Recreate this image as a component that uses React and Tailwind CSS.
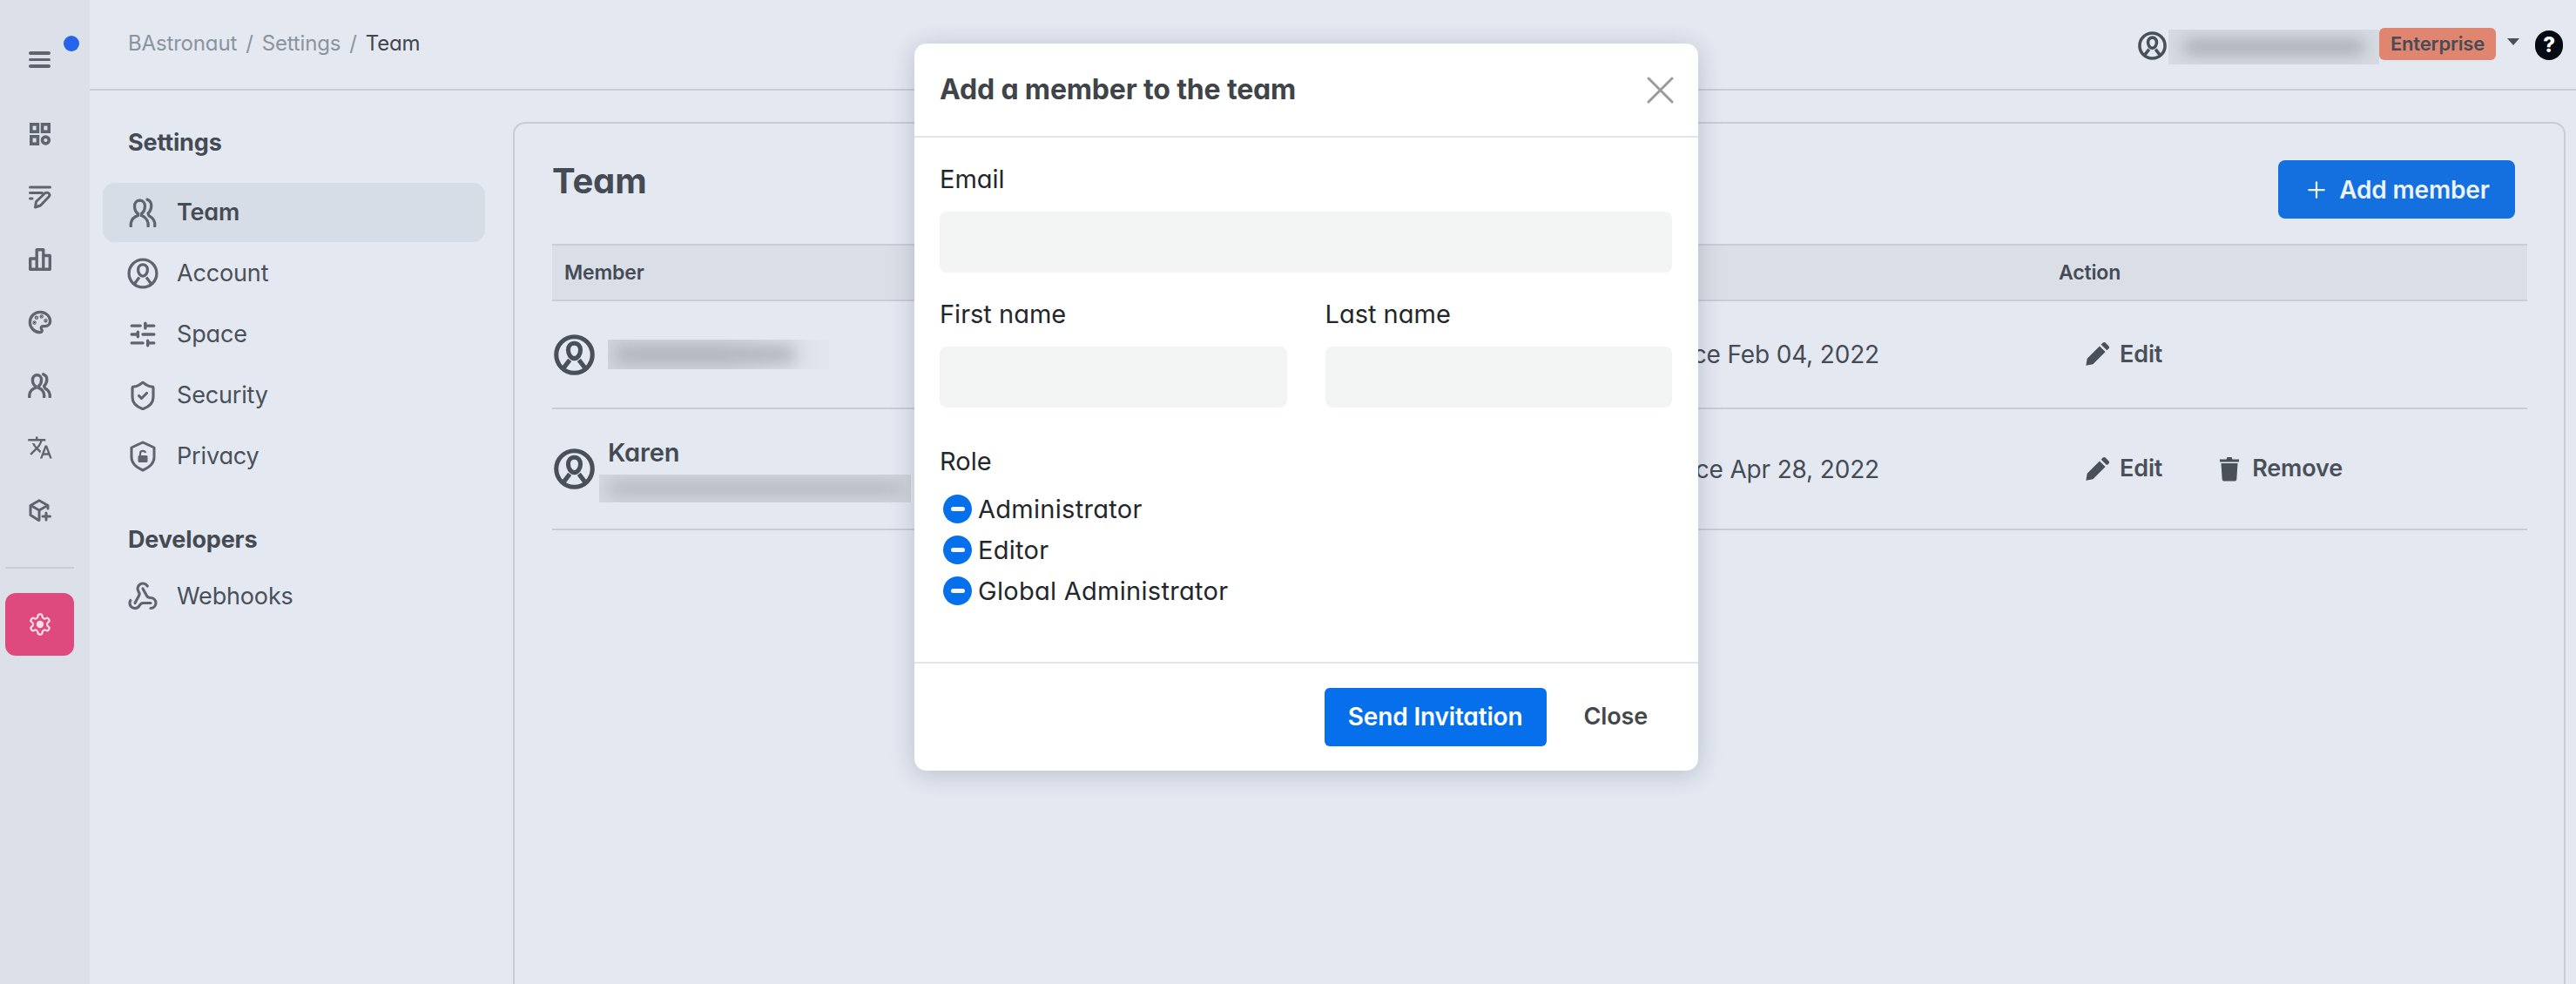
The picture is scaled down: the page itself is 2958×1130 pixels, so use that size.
import { Palette, Plus, ShieldCheck, SlidersHorizontal, Webhook } from 'lucide-react';
import { MdTranslate } from 'react-icons/md';

const UserRing = ({ size = 33, stroke = 2.6, className = 'text-[#4a5059]' }) => (
  <svg width={size} height={size} viewBox="0 0 24 24" fill="none" stroke="currentColor" strokeWidth={stroke} className={className}>
    <circle cx="12" cy="12" r="10.6" />
    <path d="M12 5.2c-2.2 0-3.6 1.7-3.6 3.9 0 2.4 1.5 5 3.6 5s3.6-2.6 3.6-5c0-2.2-1.4-3.9-3.6-3.9z" />
    <path d="M5.8 19.6l3.5-4.6M18.2 19.6l-3.5-4.6" />
  </svg>
);

const TeamIcon = ({ size = 32, stroke = 2.1 }) => (
  <svg width={size} height={size} viewBox="0 0 24 24" fill="none" stroke="#5f656e" strokeWidth={stroke} strokeLinecap="round">
    <path d="M9.500 2.200c-2.600 0-4.200 2-4.200 4.600 0 2.600 1.200 5 2.800 6.200v1.400c-2.900 1-5.400 3-5.800 6.800v2" />
    <path d="M9.500 2.200c2.600 0 4.200 2 4.200 4.600 0 2.600-1.200 5-2.800 6.200v1.400c2 .7 5 3 5.400 6.800v2" />
    <path d="M15.500 1.500c2.400.8 3.400 2.600 3.400 5 0 2.800-1.200 4.800-2.600 6.200 0 1 .4 1.600 1 2.200 1.800 1 4 3 4.400 6v2.200" />
  </svg>
);

const DashIcon = () => (
  <svg width="24" height="26" viewBox="0 0 24 26" fill="none" stroke="#5f656e" strokeWidth="3.600">
    <rect x="1.800" y="1.800" width="7.600" height="8.400" />
    <rect x="14.600" y="1.800" width="7.600" height="8.400" />
    <rect x="1.800" y="15.800" width="7.600" height="8.400" />
    <circle cx="18.400" cy="20" r="3.900" />
  </svg>
);

const NotesIcon = () => (
  <svg width="26" height="27" viewBox="0 0 26 27" fill="none" stroke="#5f656e" strokeWidth="3" strokeLinecap="round">
    <path d="M1.500 2h23M1.500 8.500h14M1.500 15h2.500" />
    <path d="M7.500 25l1-6.500L18.500 9c1.200-1.100 3.400-1.100 4.500 0s1 2.800 0 3.900L13.500 23z" strokeLinejoin="round" />
  </svg>
);

const ChartIcon = () => (
  <svg width="26" height="26" viewBox="0 0 26 26" fill="none" stroke="#5f656e" strokeWidth="3.400" strokeLinejoin="round">
    <path d="M1.700 24.300V12h7.500v12.300zM9.200 24.300V1.700h7.600v22.600zM16.800 24.300V8.500h7.500v15.800z" />
  </svg>
);

const CubeIcon = () => (
  <svg width="26" height="27" viewBox="0 0 26 27" fill="none" stroke="#5f656e" strokeWidth="3" strokeLinecap="round" strokeLinejoin="round">
    <path d="M22 11V7.500L12 1.700 2 7.500v11l9.500 6" />
    <path d="M2.500 7.500l9.500 5.500 9.500-5.500M12 13v11" />
    <path d="M20 16v8M16 20h8.500" />
  </svg>
);

const GearIcon = () => (
  <svg width="28" height="28" viewBox="0 0 24 24" fill="none" stroke="#fbdce8" strokeWidth="1.900" strokeLinejoin="round">
    <path d="M12.220 2h-.44a2 2 0 0 0-2 2v.18a2 2 0 0 1-1 1.730l-.43.250a2 2 0 0 1-2 0l-.15-.08a2 2 0 0 0-2.730.730l-.22.380a2 2 0 0 0 .730 2.730l.15.100a2 2 0 0 1 1 1.720v.510a2 2 0 0 1-1 1.740l-.15.090a2 2 0 0 0-.730 2.730l.22.380a2 2 0 0 0 2.730.730l.15-.08a2 2 0 0 1 2 0l.43.250a2 2 0 0 1 1 1.730V20a2 2 0 0 0 2 2h.44a2 2 0 0 0 2-2v-.18a2 2 0 0 1 1-1.730l.43-.25a2 2 0 0 1 2 0l.15.08a2 2 0 0 0 2.730-.73l.22-.39a2 2 0 0 0-.73-2.730l-.15-.08a2 2 0 0 1-1-1.740v-.5a2 2 0 0 1 1-1.740l.15-.09a2 2 0 0 0 .73-2.730l-.22-.38a2 2 0 0 0-2.730-.73l-.15.08a2 2 0 0 1-2 0l-.43-.25a2 2 0 0 1-1-1.730V4a2 2 0 0 0-2-2z" />
    <circle cx="12" cy="12" r="3.600" fill="#fbdce8" stroke="none" />
  </svg>
);

const LockShield = () => (
  <svg width="32" height="36" viewBox="0 0 32 36" fill="none" stroke="#5f656e" strokeWidth="3" strokeLinejoin="round">
    <path d="M16 2l13 6v11c0 7-6 12-13 15C9 31 3 26 3 19V8z" />
    <rect x="10.500" y="17" width="11" height="8" rx="1.500" fill="#5f656e" stroke="none" />
    <path d="M13 17v-2.500c0-3.500 5.500-3.500 6-.5" strokeWidth="2.200" />
  </svg>
);

const PenIcon = () => (
  <svg width="32" height="32" viewBox="0 0 24 24" fill="#4a5059">
    <path d="M2.500 21.500l1-6L14.200 4.800l5 5L8.500 20.500zM20.500 8.500l-5-5 1.600-1.600c.6-.6 1.500-.6 2.100 0l2.900 2.900c.6.600.6 1.500 0 2.100z" />
  </svg>
);

const TrashIcon = () => (
  <svg width="24" height="29" viewBox="0 0 24 29" fill="#4a5059">
    <path d="M1 3.500h7.500L9.500 1h5l1 2.500H23v3H1zM2.500 8h19l-1.200 18.500c-.1 1.200-.9 2-2.100 2H5.800c-1.200 0-2-.8-2.100-2z" />
  </svg>
);

const Blurred = ({ className, bar }) => (
  <div className={`overflow-hidden ${className}`}>
    <div className={`blur-[9px] ${bar}`} />
  </div>
);

const railIcons = [
  { key: 'dash', icon: <DashIcon /> },
  { key: 'notes', icon: <NotesIcon /> },
  { key: 'chart', icon: <ChartIcon /> },
  { key: 'palette', icon: <Palette size={28} color="#5f656e" strokeWidth={2.8} /> },
  { key: 'team', icon: <TeamIcon size={29} stroke={2.8} /> },
  { key: 'lang', icon: <MdTranslate size={30} color="#5f656e" /> },
  { key: 'cube', icon: <CubeIcon /> },
];

const navItems = [
  { label: 'Team', icon: <TeamIcon size={34} stroke={2.3} />, active: true },
  { label: 'Account', icon: <UserRing size={36} stroke={2.2} className="text-[#5f656e]" /> },
  { label: 'Space', icon: <SlidersHorizontal size={34} color="#5f656e" strokeWidth={2.4} /> },
  { label: 'Security', icon: <ShieldCheck size={37} color="#5f656e" strokeWidth={2.1} /> },
  { label: 'Privacy', icon: <LockShield /> },
];

const NavRow = ({ label, icon, active }) => (
  <div className={`h-[68px] mb-[2px] rounded-[14px] flex items-center ${active ? 'bg-[#d6dde7]' : ''}`}>
    <div className="w-[36px] ml-[28px] flex justify-center">{icon}</div>
    <span className={`ml-[21px] text-[27px] ${active ? 'font-semibold text-[#454b54]' : 'text-[#4a5059]'}`}>{label}</span>
  </div>
);

const MemberRow = ({ height, name, blur, since, canRemove }) => (
  <div className={`flex items-center border-b-2 border-[#c8ccd6] ${height}`}>
    <div className="w-[1096px] flex items-center">
      <div className="w-[48px] ml-[1px] flex justify-center"><UserRing size={47} stroke={2.6} /></div>
      {blur}
      {name}
    </div>
    <div className="w-[620px] text-right pr-[192px] text-[28px] text-[#454b54] whitespace-nowrap">{since}</div>
    <div className="flex items-center pl-[42px]">
      <PenIcon />
      <span className="ml-[10px] text-[27px] font-semibold text-[#4a5059]">Edit</span>
      {canRemove && (
        <div className="flex items-center ml-[65px]">
          <TrashIcon />
          <span className="ml-[14px] text-[27px] font-semibold text-[#4a5059]">Remove</span>
        </div>
      )}
    </div>
  </div>
);

const Role = ({ label }) => (
  <div className="h-[47px] flex items-center pl-[4px]">
    <div className="w-[33px] h-[33px] rounded-full bg-[#0670ec] flex items-center justify-center">
      <div className="w-[16px] h-[5px] rounded-full bg-[#f2f5fa]" />
    </div>
    <span className="ml-[7px] text-[29px] tracking-[0.01em] text-[#23272b]">{label}</span>
  </div>
);

const Field = ({ label, className = '' }) => (
  <div className={className}>
    <div className="h-[40px] flex items-center text-[29px] tracking-normal text-[#23272b]">{label}</div>
    <div className="mt-[17px] h-[70px] rounded-[8px] bg-[#f3f5f5]" />
  </div>
);

const App = () => {
  return (
    <div className="relative w-[2958px] h-[1130px] overflow-hidden flex bg-[#e3e8f1] font-['Inter','Liberation_Sans',sans-serif] [font-feature-settings:'cv11'] tracking-[-0.01em]">
      {/* icon rail */}
      <div className="w-[103px] bg-[#dce0e9] flex flex-col items-center shrink-0">
        <div className="relative h-[118px] w-full flex items-center justify-center pr-[12px] pt-[19px]">
          <div className="flex flex-col gap-[4px]">
            <div className="w-[25px] h-[3.5px] rounded bg-[#5f656e]" />
            <div className="w-[25px] h-[3.5px] rounded bg-[#5f656e]" />
            <div className="w-[25px] h-[3.5px] rounded bg-[#5f656e]" />
          </div>
          <div className="absolute left-[73px] top-[41px] w-[18px] h-[18px] rounded-full bg-[#2563eb]" />
        </div>
        {railIcons.map((item) => (
          <div key={item.key} className="h-[72px] w-full flex items-center justify-center pr-[12px]">{item.icon}</div>
        ))}
        <div className="w-[79px] mr-[12px] mt-[29px] border-t-2 border-[#c8ccd6]" />
        <div className="w-[79px] h-[72px] mr-[12px] mt-[28px] rounded-[12px] bg-[#de4a7e] flex items-center justify-center">
          <GearIcon />
        </div>
      </div>

      <div className="flex-1 flex flex-col min-w-0">
        {/* top bar */}
        <div className="h-[104px] shrink-0 border-b-2 border-[#c8ccd6] flex items-start pl-[44px] pr-[15px]">
          <div className="h-[100px] flex items-center text-[24px] text-[#8b939d]">
            <span>BAstronaut</span>
            <span className="mx-[10px]">/</span>
            <span>Settings</span>
            <span className="mx-[10px]">/</span>
            <span className="text-[#3f4650]">Team</span>
          </div>
          <div className="ml-auto h-[100px] pt-[4px] flex items-center">
            <UserRing size={33} />
            <Blurred className="ml-[2px] mt-[4px] w-[242px] h-[40px] bg-[#d6dae2] pt-[12px]" bar="mx-[18px] h-[16px] bg-[#a4a8b1]" />
            <div className="h-[37px] w-[134px] -mt-[3px] rounded-[6px] bg-[#e0856f] flex items-center justify-center text-[22px] font-semibold text-[#474c55]">Enterprise</div>
            <div className="ml-[13px] -mt-[8px] w-0 h-0 border-x-[7px] border-x-transparent border-t-[8px] border-t-[#4a5059]" />
            <div className="ml-[18px] w-[32px] h-[34px] rounded-full bg-[#060b13] flex items-center justify-center text-[24px] font-extrabold text-white">?</div>
          </div>
        </div>

        <div className="flex-1 flex min-h-0">
          {/* settings nav */}
          <div className="w-[486px] shrink-0 pl-[15px] pr-[32px]">
            <h2 className="h-[38px] mt-[41px] ml-[29px] flex items-center text-[27px] font-bold text-[#454b54]">Settings</h2>
            <div className="mt-[27px]">
              {navItems.map((item) => (
                <NavRow key={item.label} {...item} />
              ))}
            </div>
            <h2 className="h-[38px] mt-[43px] ml-[29px] flex items-center text-[27px] font-bold text-[#454b54]">Developers</h2>
            <div className="mt-[12px]">
              <NavRow label="Webhooks" icon={<Webhook size={36} color="#5f656e" strokeWidth={2.1} />} />
            </div>
          </div>

          {/* team panel */}
          <div className="w-[2357px] h-[1100px] mt-[36px] rounded-[14px] border-2 border-[#c8ccd6] pt-[22px] pl-[43px] pr-[42px]">
            <div className="flex items-start justify-between h-[116px]">
              <h1 className="mt-[14px] text-[40px] font-bold text-[#454b54]">Team</h1>
              <button className="mr-[14px] mt-[20px] w-[272px] h-[67px] rounded-[8px] bg-[#146fdf] flex items-center justify-center gap-[11px] text-[28px] font-semibold text-[#eaf2fd]">
                <Plus size={30} strokeWidth={1.8} />
                Add member
              </button>
            </div>
            <div className="h-[66px] bg-[#dadee7] border-y-2 border-[#c8ccd6] flex items-center text-[23px] font-semibold text-[#454b54]">
              <span className="pl-[14px] w-[1730px]">Member</span>
              <span>Action</span>
            </div>
            <MemberRow
              height="h-[124px]"
              since="Active since Feb 04, 2022"
              blur={<Blurred className="ml-[15px] w-[262px] h-[34px] bg-linear-to-r from-[#cfd3dc] via-[#cfd3dc] to-transparent pt-[9px]" bar="mx-[10px] mr-[48px] h-[16px] bg-[#a9adb6]" />}
            />
            <MemberRow
              height="h-[139px]"
              since="Active since Apr 28, 2022"
              canRemove
              name={
                <div className="ml-[5px] pt-[2px]">
                  <div className="ml-[10px] text-[29px] leading-[36px] font-semibold text-[#454b54]">Karen</div>
                  <Blurred className="mt-[7px] w-[358px] h-[32px] bg-[#d3d7df] pt-[8px]" bar="mx-[12px] h-[16px] bg-[#b2b6c0]" />
                </div>
              }
            />
          </div>
        </div>
      </div>

      {/* modal */}
      <div className="absolute left-[1050px] top-[50px] w-[900px] h-[835px] rounded-[14px] bg-white shadow-[0_4px_28px_rgba(40,50,70,0.22)] flex flex-col">
        <div className="h-[108px] shrink-0 border-b-2 border-[#e2e4e8] flex items-center justify-between pl-[29px] pr-[28px]">
          <h3 className="text-[32px] font-bold text-[#3f4448]">Add a member to the team</h3>
          <svg width="31" height="31" viewBox="0 0 31 31" stroke="#999c9f" strokeWidth="3" strokeLinecap="round">
            <path d="M2 2l27 27M29 2L2 29" />
          </svg>
        </div>
        <div className="flex-1 pl-[29px] pr-[30px] pt-[28px]">
          <Field label="Email" />
          <div className="mt-[28px] flex gap-[44px]">
            <Field label="First name" className="flex-1" />
            <Field label="Last name" className="flex-1" />
          </div>
          <div className="mt-[42px] h-[40px] flex items-center text-[29px] tracking-normal text-[#23272b]">Role</div>
          <div className="mt-[11px]">
            <Role label="Administrator" />
            <Role label="Editor" />
            <Role label="Global Administrator" />
          </div>
        </div>
        <div className="h-[125px] shrink-0 border-t-2 border-[#e2e4e8] flex items-center justify-end pr-[58px] pb-[1px]">
          <button className="w-[255px] h-[67px] rounded-[6px] bg-[#0670ec] text-[28px] font-semibold text-white">Send Invitation</button>
          <button className="ml-[43px] text-[27px] font-semibold text-[#444749]">Close</button>
        </div>
      </div>
    </div>
  );
};

export default App;
